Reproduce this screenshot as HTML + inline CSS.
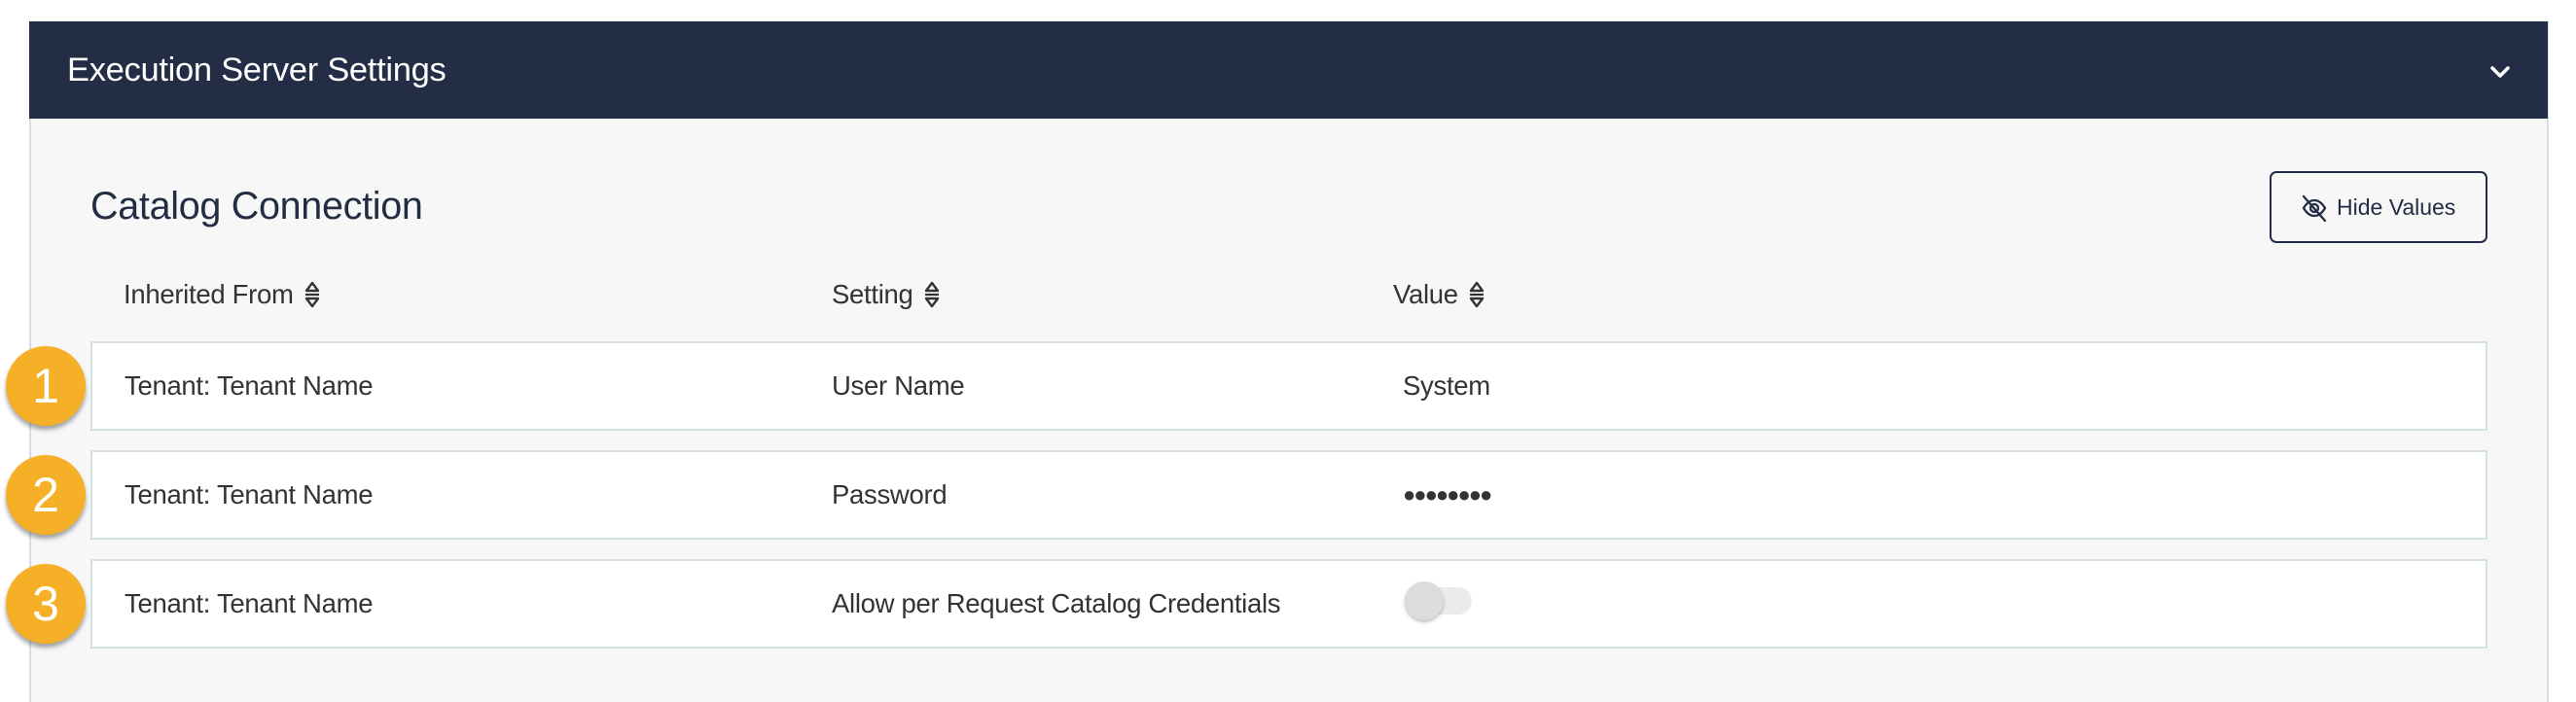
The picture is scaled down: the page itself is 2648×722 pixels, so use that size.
<!DOCTYPE html>
<html><head><meta charset="utf-8"><style>
*{box-sizing:border-box;margin:0;padding:0}
body{width:2648px;height:700px;background:#fff;font-family:"Liberation Sans",sans-serif;position:relative;overflow:hidden}
.panel{position:absolute;left:30px;top:22px;width:2590px;height:700px;background:#f7f7f7;border-left:2px solid #d3e1e4;border-right:2px solid #d3e1e4}
.hdr{position:absolute;left:30px;top:22px;width:2589px;height:100px;background:#232d45}
.hdr .t{position:absolute;left:39px;top:0;line-height:100px;color:#fff;font-size:34.5px;letter-spacing:-0.3px}
.title{position:absolute;left:93px;top:189px;font-size:39.5px;color:#222d44;line-height:46px;letter-spacing:-0.3px}
.btn{position:absolute;left:2333px;top:176px;width:224px;height:74px;border:2px solid #232d45;border-radius:7px;color:#232d45;font-size:23px;line-height:70px}
.btn span{position:absolute;left:67px}
.btn svg{position:absolute;left:29px;top:21px}
.ch{position:absolute;top:286px;font-size:27.5px;color:#333;line-height:34px;letter-spacing:-0.3px}
.row{position:absolute;left:93px;width:2464px;height:92px;background:#fff;border:2px solid #d3e1e4}
.row div{position:absolute;top:0;line-height:88px;font-size:27.5px;color:#333;letter-spacing:-0.3px}
.badge{position:absolute;left:6px;width:82px;height:82px;border-radius:50%;background:#f5b027;color:#fff;font-size:50px;text-align:center;line-height:82px;box-shadow:0 4px 5px rgba(0,0,0,.35)}
.sort{display:inline-block;vertical-align:-6px;margin-left:10px}
</style></head><body>
<div class="panel"></div>
<div class="hdr"><div class="t">Execution Server Settings</div>
<svg style="position:absolute;left:2528px;top:42px" width="24" height="20" viewBox="0 0 24 20"><path d="M4 6 L12 14 L20 6" stroke="#fff" stroke-width="3.5" fill="none" stroke-linecap="round" stroke-linejoin="round"/></svg></div>
<div class="title">Catalog Connection</div>
<div class="btn"><svg width="30" height="30" viewBox="0 0 30 30" fill="none" stroke="#232d45" stroke-width="2.3" stroke-linecap="round"><path d="M4 15c3-5 7-8 11-8s8 3 11 8c-3 5-7 8-11 8s-8-3-11-8z"/><circle cx="15" cy="15" r="4"/><path d="M4 3L26 28"/></svg><span>Hide Values</span></div>
<div class="ch" style="left:127px">Inherited From<svg class="sort" width="18" height="30" viewBox="0 0 18 30"><path d="M9 3L15 11H3z M9 27L15 19H3z" fill="none" stroke="#333" stroke-width="2.4" stroke-linejoin="round"/><path d="M2 15H16" stroke="#333" stroke-width="2.2"/></svg></div>
<div class="ch" style="left:855px">Setting<svg class="sort" width="18" height="30" viewBox="0 0 18 30"><path d="M9 3L15 11H3z M9 27L15 19H3z" fill="none" stroke="#333" stroke-width="2.4" stroke-linejoin="round"/><path d="M2 15H16" stroke="#333" stroke-width="2.2"/></svg></div>
<div class="ch" style="left:1432px">Value<svg class="sort" width="18" height="30" viewBox="0 0 18 30"><path d="M9 3L15 11H3z M9 27L15 19H3z" fill="none" stroke="#333" stroke-width="2.4" stroke-linejoin="round"/><path d="M2 15H16" stroke="#333" stroke-width="2.2"/></svg></div>

<div class="row" style="top:351px"><div style="left:33px">Tenant: Tenant Name</div><div style="left:760px">User Name</div><div style="left:1347px">System</div></div>
<div class="row" style="top:463px"><div style="left:33px">Tenant: Tenant Name</div><div style="left:760px">Password</div><div style="left:1347px;font-size:22px;letter-spacing:-2px">●●●●●●●●</div></div>
<div class="row" style="top:575px"><div style="left:33px">Tenant: Tenant Name</div><div style="left:760px">Allow per Request Catalog Credentials</div>
<span style="position:absolute;left:1352px;top:27px;width:66px;height:28px;border-radius:14px;background:#ebebeb"></span>
<span style="position:absolute;left:1349px;top:21px;width:40px;height:40px;border-radius:50%;background:#dcdcdc;box-shadow:0 2px 3px rgba(0,0,0,.25)"></span></div>

<div class="badge" style="top:356px">1</div>
<div class="badge" style="top:468px">2</div>
<div class="badge" style="top:580px">3</div>
</body></html>
